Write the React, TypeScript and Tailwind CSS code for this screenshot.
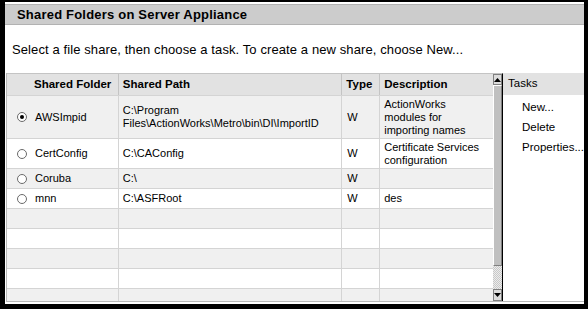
const rows = [
  { folder: "AWSImpid", path: ["C:\\Program", "Files\\ActionWorks\\Metro\\bin\\DI\\ImportID"], type: "W", desc: ["ActionWorks", "modules for", "importing names"], h: "h-[43px]", checked: true },
  { folder: "CertConfig", path: ["C:\\CAConfig"], type: "W", desc: ["Certificate Services", "configuration"], h: "h-[30px]" },
  { folder: "Coruba", path: ["C:\\"], type: "W", desc: [], h: "h-[20px]" },
  { folder: "mnn", path: ["C:\\ASFRoot"], type: "W", desc: ["des"], h: "h-[20px]" },
  { h: "h-[20px]" },
  { h: "h-[20px]" },
  { h: "h-[20px]" },
  { h: "h-[20px]" },
  { h: "h-[13px]" },
];

function Radio({ checked }: { checked?: boolean }) {
  return (
    <span className="w-[10px] h-[10px] rounded-full border border-[#6a6a6a] bg-white flex items-center justify-center shrink-0">
      {checked && <span className="w-[4px] h-[4px] rounded-full bg-black" />}
    </span>
  );
}

export default function App() {
  return (
    <div className="w-[588px] h-[309px] bg-black pt-[2px] pl-[5px] pr-[4px] pb-[5px] font-['Liberation_Sans',Arial,sans-serif] text-black">
      <div className="w-full h-full bg-white pt-[2px] flex flex-col">
        <div className="h-[21px] bg-[#cccccc] border-y border-[#b2b2b2] flex items-center pl-[12px] text-[13px] font-bold tracking-[0.2px]">
          Shared Folders on Server Appliance
        </div>
        <div className="h-[48px] flex items-center pl-[7px] text-[13px] pt-[2px] tracking-[0.1px]">
          Select a file share, then choose a task. To create a new share, choose New...
        </div>
        <div className="flex ml-[1px] h-[229px] border-b border-[#b8b8b8]">
          <div className="flex flex-col w-[487px] border-l border-[#b8b8b8] text-[11px] leading-[13px]">
            <div className="flex h-[22px] bg-[#e2e2e2] border-t border-[#c4c4c4] font-bold text-[11.5px]">
              <div className="w-[111px] pl-[27px] flex items-center">Shared Folder</div>
              <div className="w-[224px] pl-[4px] flex items-center border-l border-[#c4c4c4]">Shared Path</div>
              <div className="w-[38px] pl-[4px] flex items-center border-l border-[#c4c4c4]">Type</div>
              <div className="w-[114px] pl-[4px] flex items-center border-l border-[#c4c4c4]">Description</div>
            </div>
            {rows.map((r, i) => (
              <div
                key={i}
                className={`flex ${r.h} border-t border-[#d4d4d4] ${i % 2 === 0 ? "bg-[#f0f0f0]" : "bg-white"} overflow-hidden`}
              >
                <div className="w-[111px] pl-[10px] flex items-center gap-[8px]">
                  {r.folder && <Radio checked={r.checked} />}
                  {r.folder && <span>{r.folder}</span>}
                </div>
                <div className="w-[224px] pl-[4px] flex flex-col justify-center border-l border-[#d4d4d4] whitespace-nowrap">
                  {r.path?.map((p) => <span key={p}>{p}</span>)}
                </div>
                <div className="w-[38px] pl-[5px] flex items-center border-l border-[#d4d4d4]">{r.type}</div>
                <div className="w-[114px] pl-[4px] flex flex-col justify-center border-l border-[#d4d4d4] whitespace-nowrap">
                  {r.desc?.map((d) => <span key={d}>{d}</span>)}
                </div>
              </div>
            ))}
          </div>
          <div className="w-[12px] flex flex-col border-r border-black border-t border-t-[#c4c4c4]">
            <div className="h-[11px] bg-[#dcdcdc] border border-[#808080] flex items-center justify-center">
              <svg width="7" height="4" viewBox="0 0 7 4"><path d="M3.5 0 L7 4 L0 4 Z" fill="black" /></svg>
            </div>
            <div className="h-[181px] bg-[#c0c0c0] border border-[#808080] border-t-white border-l-white" />
            <div className="flex-1 bg-[repeating-conic-gradient(#c8c8c8_0_25%,#ececec_0_50%)] bg-[length:2px_2px]" />
            <div className="h-[12px] bg-[#dcdcdc] border border-[#808080] flex items-center justify-center">
              <svg width="7" height="4" viewBox="0 0 7 4"><path d="M0 0 L7 0 L3.5 4 Z" fill="black" /></svg>
            </div>
          </div>
          <div className="flex-1 flex flex-col text-[11.5px]">
            <div className="h-[22px] bg-[#e2e2e2] flex items-center pl-[5px]">Tasks</div>
            <div className="flex flex-col pl-[19px] pt-[5px] gap-[6px] leading-[14px]">
              <span>New...</span>
              <span>Delete</span>
              <span>Properties...</span>
            </div>
          </div>
        </div>
      </div>
    </div>
  );
}
